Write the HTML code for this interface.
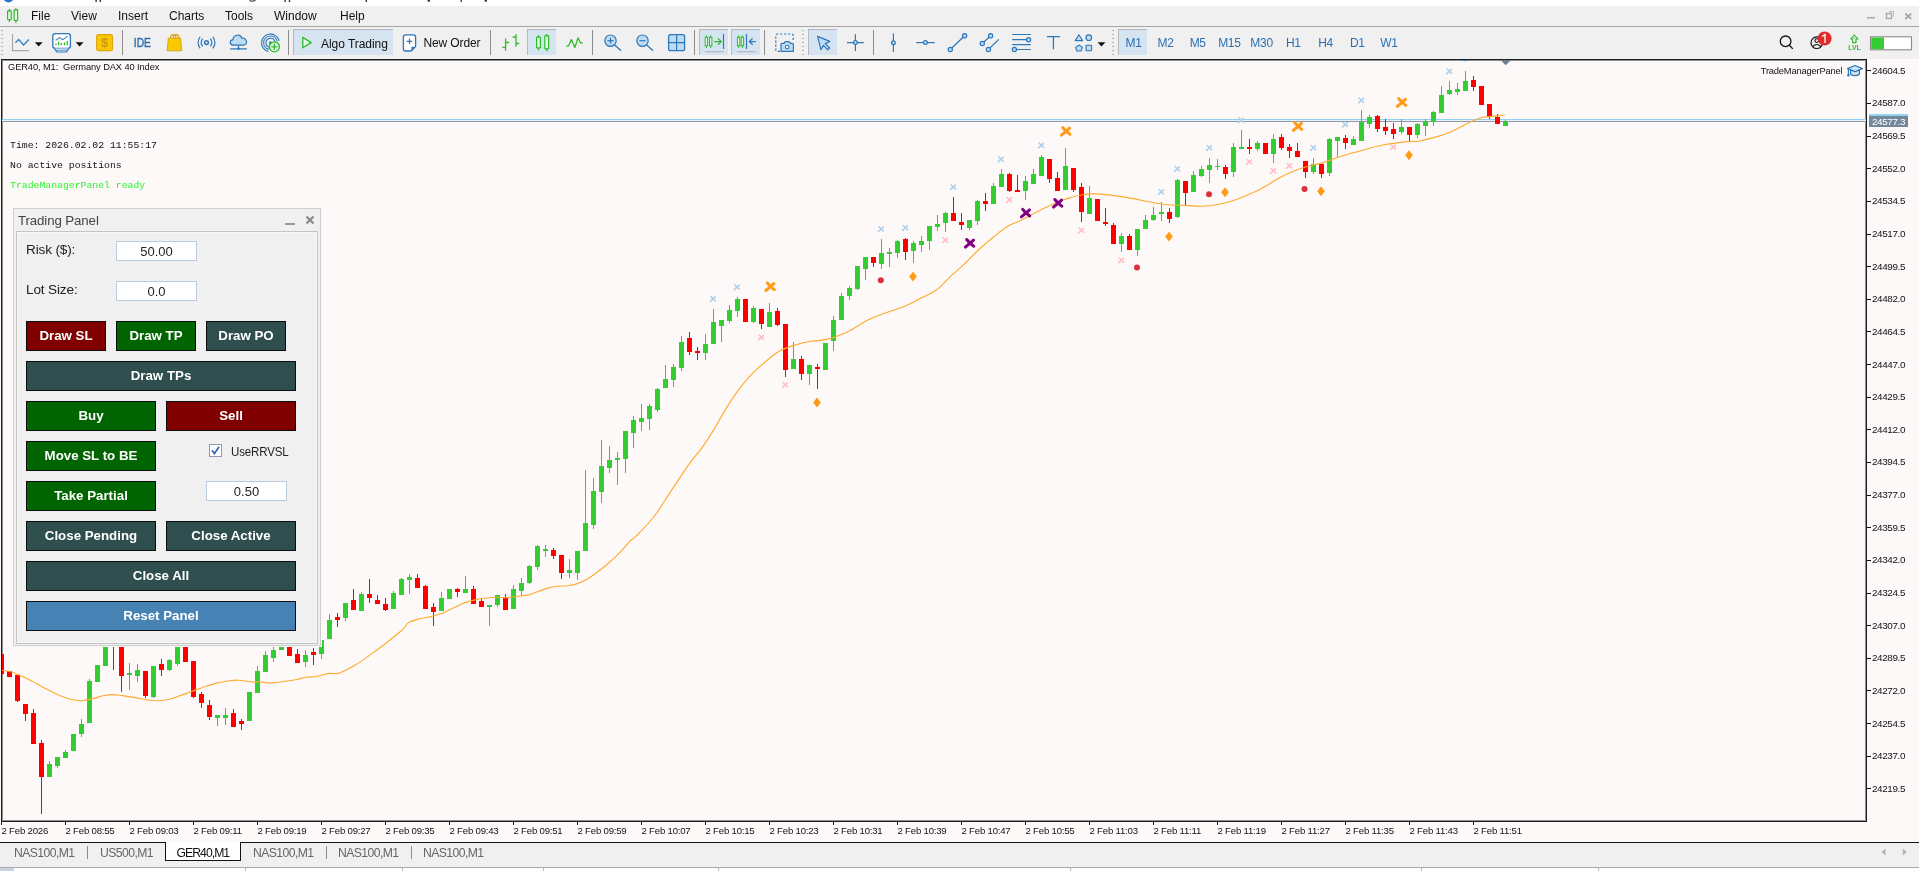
<!DOCTYPE html>
<html><head><meta charset="utf-8"><title>chart</title>
<style>
*{box-sizing:border-box;margin:0;padding:0}
html,body{width:1919px;height:871px;overflow:hidden;background:#f0f0f0;font-family:"Liberation Sans",sans-serif;}
div,svg{position:absolute}
#root{left:0;top:0;width:1919px;height:871px;will-change:transform}
#titlestrip{left:0;top:0;width:1919px;height:6px;background:#fff;overflow:hidden}
#menubar{left:0;top:6px;width:1919px;height:21px;background:#f0f0f0;border-bottom:1px solid #a6a6a6}
.menu{top:3px;font-size:12px;color:#111;line-height:14px;white-space:nowrap}
#toolbar{left:0;top:27px;width:1919px;height:32px;background:#f0f0f0}
.tbtxt{font-size:12px;line-height:14px;white-space:nowrap;color:#111}
.hl{background:#d6e4f2;border-top:1px solid #b4b9bf;border-left:1px solid #b4b9bf}
.sep{width:1px;background:#8c8c8c;top:3px;height:25px}
.dsep{width:2px;top:3px;height:25px;background:repeating-linear-gradient(to bottom,#b0b0b0 0,#b0b0b0 1.5px,transparent 1.5px,transparent 4px)}
#chart{left:0;top:59px;width:1919px;height:783px;background:#fdf9f8;overflow:hidden}
#frame{left:1px;top:0;width:1866px;height:763px;border:1px solid #1c1c1c;box-shadow:inset 0 0 0 1px rgba(0,0,0,0.42)}
#chartsvg{left:0;top:-59px}
.plab{left:1872px;font-size:9.9px;line-height:12px;color:#111;white-space:nowrap;letter-spacing:-0.37px}
.ptick{left:1867px;width:4px;height:1px;background:#111}
.tlab{top:765.5px;font-size:9.6px;line-height:11px;color:#111;white-space:nowrap;letter-spacing:-0.2px}
.ttick{top:763px;width:1px;height:3px;background:#111}
#ctitle{left:8px;top:3px;font-size:9.3px;line-height:11px;color:#111;white-space:nowrap;letter-spacing:-0.1px}
.mono{font-family:"Liberation Mono",monospace;font-size:9.8px;line-height:12px;left:10px;color:#111;white-space:nowrap}
#tmp{right:76.6px;top:6.5px;font-size:9.3px;line-height:11px;color:#111;white-space:nowrap;letter-spacing:-0.16px}
#curp{left:1869px;top:55px;width:39px;height:13px;background:#74889c;border-top:2px solid #93d4f0;color:#fff;font-size:9.9px;line-height:11.4px;padding-left:3px;letter-spacing:-0.37px}
#panel{left:13px;top:208px;width:308px;height:438px;background:#f0f0f0;border:1px solid #cfcfcf;box-shadow:0 0 0 1px #fbf8f7}
#ptitle{left:4px;top:3.5px;font-size:13.3px;line-height:16px;color:#444;white-space:nowrap;letter-spacing:-0.12px}
#pmin{left:271px;top:14px;width:10px;height:2px;background:#9a9a9a}
#pclose{left:291px;top:6px}
#pclient{left:2px;top:22px;width:302px;height:413px;border:1px solid #c4c4c4;background:#f0f0f0;box-shadow:inset 0 0 0 1px #f8f8f8}
.plabel{font-size:13px;line-height:16px;color:#222;white-space:nowrap;letter-spacing:-0.15px}
.pinput{background:#fff;border:1px solid #bccbdc;font-size:13px;line-height:19px;text-align:center;color:#222}
.pbtn{border:1px solid #0c0c0c;color:#fff;font-weight:bold;font-size:13.3px;text-align:center;line-height:28px;white-space:nowrap}
#chk{left:209px;top:444px;width:13px;height:13px;background:#fff;border:1px solid #8e9bb0;}
#chk svg{left:-1px;top:-1px}
#tabs{left:0;top:842px;width:1919px;height:25px;background:#f0f0f0;border-top:1px solid #111}
.tab{top:2.5px;font-size:12.2px;line-height:14px;color:#666;white-space:nowrap;letter-spacing:-0.57px}
.tsep{top:2.5px;width:1px;height:13px;background:#8c8c8c}
#acttab{left:165px;top:-1px;width:76px;height:18.6px;background:#fff;border:1px solid #111;border-top:none;border-bottom-width:1.5px}
#bottom{left:0;top:867px;width:1919px;height:4px;background:#fff;border-top:1px solid #ababab}
.bsep{top:0;width:1px;height:4px;background:#b8b8b8}
</style></head><body>
<div id="root">
<div id="titlestrip"><svg style="left:0;top:0" width="600" height="6" viewBox="0 0 600 6">
<ellipse cx="8.5" cy="-1.2" rx="4.6" ry="3.6" fill="#2a6fd0"/>
<g fill="#333"><rect x="95.4" y="0" width="1.4" height="2"/><rect x="99.6" y="0" width="1.4" height="2"/>
<path d="M249.5,0.3Q252,2.2 255.4,0.2" stroke="#333" stroke-width="1.1" fill="none"/>
<rect x="284.4" y="0" width="1.4" height="2"/><rect x="288.8" y="0" width="1.4" height="2"/>
<rect x="365.6" y="0" width="1.4" height="2"/><rect x="427.6" y="0" width="2.4" height="1.6"/><rect x="460.6" y="0" width="1.3" height="2"/><rect x="484.6" y="0" width="2.4" height="1.6"/>
</g></svg></div>
<div id="menubar"><svg style="left:0px;top:-6px" width="30" height="30" viewBox="0 0 30 30">
<g stroke="#22b022" stroke-width="1.1" fill="#e2fbe2"><path d="M9.4,9V22M15.9,8.2V23" fill="none"/><rect x="7.6" y="10.9" width="3.6" height="8.8" rx="0.7"/><rect x="14.1" y="9.9" width="3.6" height="10.6" rx="0.7"/></g></svg><div class="menu" style="left:31px">File</div><div class="menu" style="left:71px">View</div><div class="menu" style="left:118px">Insert</div><div class="menu" style="left:169px">Charts</div><div class="menu" style="left:225px">Tools</div><div class="menu" style="left:274px">Window</div><div class="menu" style="left:340px">Help</div><svg style="left:1860px;top:0" width="59" height="21" viewBox="1860 6 59 21">
<rect x="1867" y="17" width="8" height="1.5" fill="#a8a8a8"/>
<rect x="1886.5" y="13.5" width="5" height="5" fill="none" stroke="#a8a8a8" stroke-width="1.4"/><path d="M1889,11.5H1893.5V16.5" fill="none" stroke="#b8b8b8" stroke-width="1"/>
<path d="M1905.3,13.6L1911.3,18.8M1911.3,13.6L1905.3,18.8" stroke="#a0a0a0" stroke-width="1.7"/></svg></div>
<div id="toolbar"><div class="dsep" style="left:1px;top:3px;height:27px"></div><div class="hl" style="left:293px;top:2px;width:100px;height:26px"></div><div class="hl" style="left:527px;top:2px;width:29px;height:26px"></div><div class="hl" style="left:699px;top:2px;width:29px;height:26px"></div><div class="hl" style="left:731px;top:2px;width:29px;height:26px"></div><div class="hl" style="left:808px;top:2px;width:29px;height:26px"></div><div class="hl" style="left:1118px;top:2px;width:29px;height:26px"></div><div class="sep" style="left:122px"></div><div class="sep" style="left:288px"></div><div class="sep" style="left:490px"></div><div class="sep" style="left:592px"></div><div class="sep" style="left:694px"></div><div class="sep" style="left:764px"></div><div class="sep" style="left:873px"></div><div class="dsep" style="left:802px"></div><div class="dsep" style="left:1112px"></div><svg style="left:0;top:-27px" width="1919" height="60" viewBox="0 0 1919 60" fill="none"><path d="M12.5,34V50.6H29" stroke="#a8a8a8" stroke-width="1.1"/><path d="M15.4,42.7L18.7,39.5L23.6,45L28.9,39.5" stroke="#3a85c8" stroke-width="1.4"/><path d="M34.800000000000004,42.2H42.6L38.7,46.400000000000006Z" fill="#111"/><rect x="52.8" y="33.7" width="17.6" height="14.6" rx="2.6" fill="#fff" stroke="#2f77b8" stroke-width="1.3"/><path d="M54.3,48.4L56.8,52H66.4L68.9,48.4" stroke="#2f77b8" stroke-width="1.2" fill="#fff"/><path d="M56,50.2H67.2" stroke="#2f77b8" stroke-width="0.9"/><path d="M55.6,40.4L59.6,37.6L62.8,39.6L67.6,36.4" stroke="#2f77b8" stroke-width="1.1"/><g fill="#2dbb2d"><rect x="55.3" y="43.6" width="1.3" height="1.6"/><rect x="57.9" y="41.8" width="1.3" height="3.4"/><rect x="60.6" y="43" width="1.3" height="2.2"/><rect x="63.8" y="42.4" width="1.3" height="2.8"/><rect x="66.6" y="41" width="1.3" height="4.2"/></g><path d="M75.69999999999999,42.2H83.5L79.6,46.400000000000006Z" fill="#111"/><rect x="96.6" y="34.6" width="16" height="16" rx="2.2" fill="#f8c900" stroke="#dea512" stroke-width="1.1"/><text x="104.7" y="47.4" font-size="13" font-weight="bold" text-anchor="middle" fill="#d3920f" font-family="Liberation Sans">$</text><text x="142.4" y="47.2" font-size="12.4" text-anchor="middle" fill="#2a6cab" stroke="#2a6cab" stroke-width="0.35" font-family="Liberation Sans" textLength="17.2" lengthAdjust="spacingAndGlyphs">IDE</text><path d="M170.5,40V37.8C170.5,33.6 176,33.6 176,37.8V40M173.4,40V37.8C173.4,33.6 178.9,33.6 178.9,37.8V40" stroke="#d9a11b" stroke-width="1.2"/><path d="M168.3,38.2H180.6L181.7,50.8H167.2Z" fill="#f8c900" stroke="#dba415" stroke-width="1"/><circle cx="206.5" cy="42.6" r="1.9" stroke="#2f77b8" stroke-width="1.5"/><path d="M202.8,38.800000000000004A5.1,5.1 0 0 0 202.8,46.4M210.2,38.800000000000004A5.1,5.1 0 0 1 210.2,46.4" stroke="#2f77b8" stroke-width="1.2"/><path d="M200.2,36.800000000000004A9,9 0 0 0 200.2,48.4M212.8,36.800000000000004A9,9 0 0 1 212.8,48.4" stroke="#2f77b8" stroke-width="1.2"/><path d="M233.6,45.2C229.4,45.2 229.2,40.2 233,39.7C233,34.6 240.6,33.4 241.9,38.2C247.2,37.2 248.2,45.2 243.4,45.2Z" fill="#bcdcf2" stroke="#2f77b8" stroke-width="1.2"/><path d="M238.5,45.2V49M230.2,48.8H246.8" stroke="#2f77b8" stroke-width="1.2"/><circle cx="238.5" cy="48.8" r="1.3" fill="#2f77b8"/><circle cx="270.5" cy="42.8" r="1.6" fill="#2f77b8"/><path d="M274.9,41.8A4.5,4.5 0 1 0 269.5,47.199999999999996" stroke="#2f77b8" stroke-width="1.1"/><path d="M277.1,41.3A6.8,6.8 0 1 0 269.0,49.4" stroke="#2f77b8" stroke-width="1.1"/><path d="M279.1,40.8A8.9,8.9 0 1 0 268.5,51.5" stroke="#2f77b8" stroke-width="1.1"/><circle cx="274.4" cy="46.8" r="5" fill="#dcf7dc" stroke="#2dbb2d" stroke-width="1.3"/><path d="M271.4,46.8H277.4M274.4,43.8V49.8" stroke="#2dbb2d" stroke-width="1.3"/><path d="M302.8,37.4L311.2,42.6L302.8,47.8Z" fill="#e6f8e6" stroke="#2dbb2d" stroke-width="1.3" stroke-linejoin="round"/><path d="M405.6,34.8H413.4Q415.6,34.8 415.6,37V46.6L411.2,51H405.6Q403.4,51 403.4,48.8V37Q403.4,34.8 405.6,34.8Z" fill="#fff" stroke="#2f77b8" stroke-width="1.3"/><path d="M415.4,46.8H411.4V50.8Z" fill="#2f77b8"/><path d="M406.6,41.4H412.4M409.5,38.5V44.3" stroke="#2f77b8" stroke-width="1.2"/><path d="M505.6,38.6V50.8M502.3,47.4H505.6M505.6,42.5H509M516,34.2V46.8M512.7,37H516M516,43.5H519.2" stroke="#2dbb2d" stroke-width="1.3"/><path d="M538.5,35.3V50.2M546.7,33.9V51.2" stroke="#2dbb2d" stroke-width="1.2"/><rect x="536.6" y="37.1" width="3.8" height="10.8" rx="0.5" fill="#e4fbe4" stroke="#2dbb2d" stroke-width="1.2"/><rect x="544.8" y="35.9" width="3.8" height="13" rx="0.5" fill="#e4fbe4" stroke="#2dbb2d" stroke-width="1.2"/><path d="M566.2,45.8H568.6L571.4,39.6L574.8,47.6L578,37.8L580.4,42.8H582.8" stroke="#2dbb2d" stroke-width="1.3" stroke-linejoin="round"/><circle cx="610.5" cy="40.7" r="5.7" fill="#bcdcf2" stroke="#2f77b8" stroke-width="1.2"/><path d="M614.7,44.9L621.1,50.8" stroke="#2f77b8" stroke-width="1.3"/><path d="M607.5,40.7H613.5" stroke="#2f77b8" stroke-width="1.2"/><path d="M610.5,37.7V43.7" stroke="#2f77b8" stroke-width="1.2"/><circle cx="642.5" cy="40.7" r="5.7" fill="#bcdcf2" stroke="#2f77b8" stroke-width="1.2"/><path d="M646.7,44.9L653.1,50.8" stroke="#2f77b8" stroke-width="1.3"/><path d="M639.5,40.7H645.5" stroke="#2f77b8" stroke-width="1.2"/><rect x="668.6" y="34.7" width="16" height="16" rx="2" fill="#bcdcf2" stroke="#2f77b8" stroke-width="1.3"/><path d="M676.6,34.7V50.7M668.6,42.7H684.6" stroke="#2f77b8" stroke-width="1.2"/><path d="M706.4,35.3V48M710.7,35.3V48" stroke="#2dbb2d" stroke-width="1"/><rect x="705.2" y="37.2" width="2.4" height="8.6" fill="#e4fbe4" stroke="#2dbb2d" stroke-width="1"/><rect x="709.5" y="37.2" width="2.4" height="8.6" fill="#e4fbe4" stroke="#2dbb2d" stroke-width="1"/><path d="M714.2,41.6H721M718,38.4L721.2,41.6L718,44.8" stroke="#2dbb2d" stroke-width="1.3"/><path d="M723.5,33.9V49" stroke="#2f77b8" stroke-width="1.2"/><path d="M705,51.7H723.8" stroke="#aeb4ba" stroke-width="1.1"/><path d="M738.6,35.3V48M742.4,35.3V48" stroke="#2dbb2d" stroke-width="1"/><rect x="737.4" y="37.2" width="2.4" height="8.6" fill="#e4fbe4" stroke="#2dbb2d" stroke-width="1"/><rect x="741.2" y="37.2" width="2.4" height="8.6" fill="#e4fbe4" stroke="#2dbb2d" stroke-width="1"/><path d="M746.5,33.9V49" stroke="#2f77b8" stroke-width="1.2"/><path d="M749.6,41.6H755.8M752.6,38.4L749.4,41.6L752.6,44.8" stroke="#2f77b8" stroke-width="1.3"/><path d="M737.2,51.7H755.8" stroke="#aeb4ba" stroke-width="1.1"/><path d="M780,51.4H777.4Q775.8,51.4 775.8,49.8V35.6Q775.8,34 777.4,34H791.6Q793.2,34 793.2,35.6V41" stroke="#2f77b8" stroke-width="1.2" stroke-dasharray="2.2,1.8"/><path d="M781,51.4V44.6Q781,43.4 782.2,43.4H784L785.2,41.6H789.2L790.4,43.4H792.2Q793.4,43.4 793.4,44.6V51.4Z" fill="#bcdcf2" stroke="#2f77b8" stroke-width="1.2" stroke-linejoin="round"/><circle cx="787.2" cy="47" r="1.8" fill="#fff" stroke="#2f77b8" stroke-width="1.1"/><path d="M817.6,36.4L829.8,41.4L825.2,43.6L829.6,48L827.6,49.8L823.4,45.4L821,49.8Z" fill="#bcdcf2" stroke="#2f77b8" stroke-width="1.2" stroke-linejoin="round"/><path d="M847,42.6H863.8M855.4,34.2V51" stroke="#2f77b8" stroke-width="1.2"/><circle cx="855.4" cy="42.6" r="1.9" fill="#bcdcf2" stroke="#2f77b8" stroke-width="1.2"/><path d="M893.4,33.4V52" stroke="#2f77b8" stroke-width="1.2"/><circle cx="893.4" cy="42.7" r="1.9" fill="#bcdcf2" stroke="#2f77b8" stroke-width="1.2"/><path d="M916.2,42.6H934.8" stroke="#2f77b8" stroke-width="1.2"/><circle cx="925.4" cy="42.6" r="1.9" fill="#bcdcf2" stroke="#2f77b8" stroke-width="1.2"/><path d="M950.3,49.5L964.6,35.8" stroke="#2f77b8" stroke-width="1.2"/><circle cx="950.3" cy="49.5" r="2.1" fill="#bcdcf2" stroke="#2f77b8" stroke-width="1.2"/><circle cx="964.6" cy="35.8" r="2.1" fill="#bcdcf2" stroke="#2f77b8" stroke-width="1.2"/><path d="M982.3,43.5L990.6,35.8M988.4,49.5L998.8,39.4" stroke="#2f77b8" stroke-width="1.2"/><circle cx="982.3" cy="43.5" r="2.1" fill="#bcdcf2" stroke="#2f77b8" stroke-width="1.2"/><circle cx="990.6" cy="35.8" r="2.1" fill="#bcdcf2" stroke="#2f77b8" stroke-width="1.2"/><circle cx="988.4" cy="49.5" r="2.1" fill="#bcdcf2" stroke="#2f77b8" stroke-width="1.2"/><path d="M1012.2,34.5H1030.8M1012.2,39.7H1030.8M1012.2,44.6H1030.8M1012.2,49.5H1030.8" stroke="#2f77b8" stroke-width="1.2"/><circle cx="1028.6" cy="39.7" r="2.1" fill="#bcdcf2" stroke="#2f77b8" stroke-width="1.2"/><circle cx="1014.4" cy="49.5" r="2.1" fill="#bcdcf2" stroke="#2f77b8" stroke-width="1.2"/><path d="M1047,36.6H1060M1053.4,36.6V49.3" stroke="#2f77b8" stroke-width="1.3"/><path d="M1078.9,34.8L1082.6,40.6H1075.2Z" fill="#bcdcf2" stroke="#2f77b8" stroke-width="1.1" stroke-linejoin="round"/><circle cx="1088.8" cy="37.7" r="2.8" fill="#bcdcf2" stroke="#2f77b8" stroke-width="1.2"/><path d="M1079,45L1082.4,47.4L1081.2,51H1076.8L1075.6,47.4Z" fill="#bcdcf2" stroke="#2f77b8" stroke-width="1.1" stroke-linejoin="round"/><rect x="1086" y="45.2" width="5.6" height="5.6" rx="0.6" fill="#bcdcf2" stroke="#2f77b8" stroke-width="1.1"/><path d="M1097.6,42.2H1105.4L1101.5,46.400000000000006Z" fill="#111"/><circle cx="1785.6" cy="41.3" r="5.3" stroke="#111" stroke-width="1.3"/><path d="M1789.4,45.3L1792.8,48.9" stroke="#111" stroke-width="1.3"/><circle cx="1816.8" cy="42.7" r="5.8" stroke="#111" stroke-width="1.2"/><circle cx="1816.8" cy="40.6" r="1.9" stroke="#111" stroke-width="1.1"/><path d="M1812.6,46.6Q1816.8,42.4 1821,46.6" stroke="#111" stroke-width="1.1"/><circle cx="1824.6" cy="38.5" r="7" fill="#e02b2b"/><path d="M1822.2,36.4L1825,34.4V42.9" stroke="#fff" stroke-width="1.3" fill="none"/><path d="M1854.3,35L1858,39H1856V42.6H1852.6V39H1850.6Z" stroke="#2dbb2d" stroke-width="1.1" stroke-linejoin="round"/><path d="M1853.4,38.4L1854.3,37.4L1855.2,38.4" stroke="#2dbb2d" stroke-width="0.9"/><text x="1854.5" y="50" font-size="7.4" font-weight="bold" text-anchor="middle" fill="#2dbb2d" font-family="Liberation Sans" textLength="12.4" lengthAdjust="spacingAndGlyphs">LVL</text><rect x="1870.5" y="36.8" width="41" height="13" fill="#fff" stroke="#8a8a8a" stroke-width="1.1"/><rect x="1871.2" y="37.5" width="12.8" height="11.6" fill="#35cc35"/></svg><div class="tbtxt" style="left:321px;top:10px;letter-spacing:-0.05px">Algo Trading</div><div class="tbtxt" style="left:423.5px;top:9px;letter-spacing:-0.12px">New Order</div><div class="tbtxt" style="left:1113.5px;width:40px;text-align:center;top:9px;color:#2a70b4;letter-spacing:-0.3px">M1</div><div class="tbtxt" style="left:1145.5px;width:40px;text-align:center;top:9px;color:#2a70b4;letter-spacing:-0.3px">M2</div><div class="tbtxt" style="left:1177.7px;width:40px;text-align:center;top:9px;color:#2a70b4;letter-spacing:-0.3px">M5</div><div class="tbtxt" style="left:1209.4px;width:40px;text-align:center;top:9px;color:#2a70b4;letter-spacing:-0.3px">M15</div><div class="tbtxt" style="left:1241.6px;width:40px;text-align:center;top:9px;color:#2a70b4;letter-spacing:-0.3px">M30</div><div class="tbtxt" style="left:1273.3px;width:40px;text-align:center;top:9px;color:#2a70b4;letter-spacing:-0.3px">H1</div><div class="tbtxt" style="left:1305.5px;width:40px;text-align:center;top:9px;color:#2a70b4;letter-spacing:-0.3px">H4</div><div class="tbtxt" style="left:1337.3px;width:40px;text-align:center;top:9px;color:#2a70b4;letter-spacing:-0.3px">D1</div><div class="tbtxt" style="left:1369px;width:40px;text-align:center;top:9px;color:#2a70b4;letter-spacing:-0.3px">W1</div></div>
<div id="chart">
 <div id="frame"></div>
 <svg id="chartsvg" width="1919" height="871" viewBox="0 0 1919 871">
  <clipPath id="cc"><rect x="2" y="60" width="1864" height="761"/></clipPath>
  <g clip-path="url(#cc)" shape-rendering="crispEdges">
   <rect x="2" y="119" width="1864" height="1" fill="#8fd1f0"/>
   <rect x="2" y="120" width="1864" height="1" fill="#e9f0f6"/>
   <rect x="2" y="121" width="1864" height="1" fill="#8b9bad"/>
   <rect x="1" y="654" width="1" height="20" fill="#ff0000"/>
<rect x="-1" y="654" width="5" height="20" fill="#ff0000"/>
<rect x="9" y="671" width="1" height="6" fill="#ff0000"/>
<rect x="7" y="671" width="5" height="6" fill="#ff0000"/>
<rect x="17" y="675" width="1" height="27" fill="#ff0000"/>
<rect x="15" y="675" width="5" height="26" fill="#ff0000"/>
<rect x="25" y="704" width="1" height="17" fill="#ff0000"/>
<rect x="23" y="704" width="5" height="10" fill="#ff0000"/>
<rect x="33" y="709" width="1" height="35" fill="#ff0000"/>
<rect x="31" y="713" width="5" height="31" fill="#ff0000"/>
<rect x="41" y="740" width="1" height="74" fill="#ff0000"/>
<rect x="39" y="743" width="5" height="34" fill="#ff0000"/>
<rect x="49" y="761" width="1" height="16" fill="#32cd32"/>
<rect x="47" y="764" width="5" height="13" fill="#32cd32"/>
<rect x="57" y="757" width="1" height="11" fill="#32cd32"/>
<rect x="55" y="757" width="5" height="9" fill="#32cd32"/>
<rect x="65" y="750" width="1" height="8" fill="#32cd32"/>
<rect x="63" y="752" width="5" height="6" fill="#32cd32"/>
<rect x="73" y="734" width="1" height="17" fill="#32cd32"/>
<rect x="71" y="734" width="5" height="17" fill="#32cd32"/>
<rect x="81" y="719" width="1" height="18" fill="#32cd32"/>
<rect x="79" y="724" width="5" height="10" fill="#32cd32"/>
<rect x="89" y="679" width="1" height="44" fill="#32cd32"/>
<rect x="87" y="681" width="5" height="42" fill="#32cd32"/>
<rect x="97" y="665" width="1" height="17" fill="#32cd32"/>
<rect x="95" y="665" width="5" height="17" fill="#32cd32"/>
<rect x="105" y="638" width="1" height="28" fill="#32cd32"/>
<rect x="103" y="640" width="5" height="26" fill="#32cd32"/>
<rect x="113" y="628" width="1" height="42" fill="#ff0000"/>
<rect x="111" y="630" width="5" height="10" fill="#ff0000"/>
<rect x="121" y="636" width="1" height="56" fill="#ff0000"/>
<rect x="119" y="638" width="5" height="38" fill="#ff0000"/>
<rect x="129" y="663" width="1" height="27" fill="#32cd32"/>
<rect x="127" y="673" width="5" height="2" fill="#32cd32"/>
<rect x="137" y="664" width="1" height="18" fill="#32cd32"/>
<rect x="135" y="670" width="5" height="6" fill="#32cd32"/>
<rect x="145" y="671" width="1" height="27" fill="#ff0000"/>
<rect x="143" y="671" width="5" height="25" fill="#ff0000"/>
<rect x="153" y="666" width="1" height="32" fill="#32cd32"/>
<rect x="151" y="666" width="5" height="31" fill="#32cd32"/>
<rect x="161" y="659" width="1" height="17" fill="#ff0000"/>
<rect x="159" y="664" width="5" height="6" fill="#ff0000"/>
<rect x="169" y="659" width="1" height="12" fill="#32cd32"/>
<rect x="167" y="660" width="5" height="10" fill="#32cd32"/>
<rect x="177" y="638" width="1" height="28" fill="#32cd32"/>
<rect x="175" y="640" width="5" height="24" fill="#32cd32"/>
<rect x="185" y="638" width="1" height="24" fill="#ff0000"/>
<rect x="183" y="640" width="5" height="22" fill="#ff0000"/>
<rect x="193" y="661" width="1" height="37" fill="#ff0000"/>
<rect x="191" y="661" width="5" height="36" fill="#ff0000"/>
<rect x="201" y="692" width="1" height="16" fill="#ff0000"/>
<rect x="199" y="694" width="5" height="9" fill="#ff0000"/>
<rect x="209" y="700" width="1" height="20" fill="#ff0000"/>
<rect x="207" y="705" width="5" height="12" fill="#ff0000"/>
<rect x="217" y="715" width="1" height="11" fill="#32cd32"/>
<rect x="215" y="715" width="5" height="3" fill="#32cd32"/>
<rect x="225" y="708" width="1" height="17" fill="#32cd32"/>
<rect x="223" y="715" width="5" height="3" fill="#32cd32"/>
<rect x="233" y="709" width="1" height="18" fill="#ff0000"/>
<rect x="231" y="713" width="5" height="14" fill="#ff0000"/>
<rect x="241" y="719" width="1" height="11" fill="#ff0000"/>
<rect x="239" y="721" width="5" height="3" fill="#ff0000"/>
<rect x="249" y="692" width="1" height="29" fill="#32cd32"/>
<rect x="247" y="692" width="5" height="29" fill="#32cd32"/>
<rect x="257" y="666" width="1" height="27" fill="#32cd32"/>
<rect x="255" y="671" width="5" height="22" fill="#32cd32"/>
<rect x="265" y="651" width="1" height="21" fill="#32cd32"/>
<rect x="263" y="655" width="5" height="17" fill="#32cd32"/>
<rect x="273" y="647" width="1" height="15" fill="#32cd32"/>
<rect x="271" y="650" width="5" height="8" fill="#32cd32"/>
<rect x="281" y="638" width="1" height="12" fill="#32cd32"/>
<rect x="279" y="640" width="5" height="10" fill="#32cd32"/>
<rect x="289" y="638" width="1" height="18" fill="#ff0000"/>
<rect x="287" y="640" width="5" height="16" fill="#ff0000"/>
<rect x="297" y="649" width="1" height="14" fill="#ff0000"/>
<rect x="295" y="654" width="5" height="9" fill="#ff0000"/>
<rect x="305" y="650" width="1" height="17" fill="#32cd32"/>
<rect x="303" y="655" width="5" height="7" fill="#32cd32"/>
<rect x="313" y="648" width="1" height="17" fill="#ff0000"/>
<rect x="311" y="652" width="5" height="3" fill="#ff0000"/>
<rect x="321" y="638" width="1" height="21" fill="#32cd32"/>
<rect x="319" y="640" width="5" height="14" fill="#32cd32"/>
<rect x="329" y="614" width="1" height="25" fill="#32cd32"/>
<rect x="327" y="620" width="5" height="19" fill="#32cd32"/>
<rect x="337" y="613" width="1" height="14" fill="#ff0000"/>
<rect x="335" y="617" width="5" height="3" fill="#ff0000"/>
<rect x="345" y="603" width="1" height="18" fill="#32cd32"/>
<rect x="343" y="603" width="5" height="15" fill="#32cd32"/>
<rect x="353" y="589" width="1" height="21" fill="#ff0000"/>
<rect x="351" y="600" width="5" height="10" fill="#ff0000"/>
<rect x="361" y="592" width="1" height="19" fill="#32cd32"/>
<rect x="359" y="594" width="5" height="17" fill="#32cd32"/>
<rect x="369" y="579" width="1" height="24" fill="#ff0000"/>
<rect x="367" y="594" width="5" height="4" fill="#ff0000"/>
<rect x="377" y="595" width="1" height="9" fill="#ff0000"/>
<rect x="375" y="600" width="5" height="4" fill="#ff0000"/>
<rect x="385" y="598" width="1" height="13" fill="#ff0000"/>
<rect x="383" y="604" width="5" height="6" fill="#ff0000"/>
<rect x="393" y="591" width="1" height="18" fill="#32cd32"/>
<rect x="391" y="593" width="5" height="16" fill="#32cd32"/>
<rect x="401" y="578" width="1" height="17" fill="#32cd32"/>
<rect x="399" y="579" width="5" height="16" fill="#32cd32"/>
<rect x="409" y="574" width="1" height="20" fill="#32cd32"/>
<rect x="407" y="577" width="5" height="3" fill="#32cd32"/>
<rect x="417" y="574" width="1" height="14" fill="#ff0000"/>
<rect x="415" y="578" width="5" height="10" fill="#ff0000"/>
<rect x="425" y="585" width="1" height="24" fill="#ff0000"/>
<rect x="423" y="586" width="5" height="23" fill="#ff0000"/>
<rect x="433" y="603" width="1" height="23" fill="#ff0000"/>
<rect x="431" y="607" width="5" height="5" fill="#ff0000"/>
<rect x="441" y="592" width="1" height="19" fill="#32cd32"/>
<rect x="439" y="598" width="5" height="13" fill="#32cd32"/>
<rect x="449" y="589" width="1" height="10" fill="#32cd32"/>
<rect x="447" y="589" width="5" height="10" fill="#32cd32"/>
<rect x="457" y="588" width="1" height="9" fill="#ff0000"/>
<rect x="455" y="589" width="5" height="3" fill="#ff0000"/>
<rect x="465" y="576" width="1" height="17" fill="#32cd32"/>
<rect x="463" y="589" width="5" height="4" fill="#32cd32"/>
<rect x="473" y="586" width="1" height="18" fill="#ff0000"/>
<rect x="471" y="589" width="5" height="15" fill="#ff0000"/>
<rect x="481" y="598" width="1" height="9" fill="#ff0000"/>
<rect x="479" y="601" width="5" height="6" fill="#ff0000"/>
<rect x="489" y="605" width="1" height="21" fill="#32cd32"/>
<rect x="487" y="605" width="5" height="2" fill="#32cd32"/>
<rect x="497" y="595" width="1" height="12" fill="#32cd32"/>
<rect x="495" y="595" width="5" height="10" fill="#32cd32"/>
<rect x="505" y="594" width="1" height="16" fill="#ff0000"/>
<rect x="503" y="597" width="5" height="13" fill="#ff0000"/>
<rect x="513" y="585" width="1" height="24" fill="#32cd32"/>
<rect x="511" y="589" width="5" height="20" fill="#32cd32"/>
<rect x="521" y="578" width="1" height="17" fill="#32cd32"/>
<rect x="519" y="583" width="5" height="8" fill="#32cd32"/>
<rect x="529" y="565" width="1" height="19" fill="#32cd32"/>
<rect x="527" y="566" width="5" height="17" fill="#32cd32"/>
<rect x="537" y="545" width="1" height="25" fill="#32cd32"/>
<rect x="535" y="546" width="5" height="21" fill="#32cd32"/>
<rect x="545" y="545" width="1" height="12" fill="#32cd32"/>
<rect x="543" y="549" width="5" height="2" fill="#32cd32"/>
<rect x="553" y="548" width="1" height="11" fill="#ff0000"/>
<rect x="551" y="550" width="5" height="6" fill="#ff0000"/>
<rect x="561" y="555" width="1" height="24" fill="#ff0000"/>
<rect x="559" y="555" width="5" height="18" fill="#ff0000"/>
<rect x="569" y="559" width="1" height="19" fill="#32cd32"/>
<rect x="567" y="570" width="5" height="3" fill="#32cd32"/>
<rect x="577" y="551" width="1" height="29" fill="#32cd32"/>
<rect x="575" y="551" width="5" height="22" fill="#32cd32"/>
<rect x="585" y="470" width="1" height="81" fill="#32cd32"/>
<rect x="583" y="523" width="5" height="28" fill="#32cd32"/>
<rect x="593" y="478" width="1" height="51" fill="#32cd32"/>
<rect x="591" y="491" width="5" height="34" fill="#32cd32"/>
<rect x="601" y="440" width="1" height="63" fill="#32cd32"/>
<rect x="599" y="466" width="5" height="26" fill="#32cd32"/>
<rect x="609" y="446" width="1" height="27" fill="#32cd32"/>
<rect x="607" y="460" width="5" height="8" fill="#32cd32"/>
<rect x="617" y="452" width="1" height="33" fill="#32cd32"/>
<rect x="615" y="458" width="5" height="2" fill="#32cd32"/>
<rect x="625" y="431" width="1" height="42" fill="#32cd32"/>
<rect x="623" y="431" width="5" height="28" fill="#32cd32"/>
<rect x="633" y="416" width="1" height="32" fill="#32cd32"/>
<rect x="631" y="420" width="5" height="13" fill="#32cd32"/>
<rect x="641" y="404" width="1" height="27" fill="#32cd32"/>
<rect x="639" y="418" width="5" height="4" fill="#32cd32"/>
<rect x="649" y="404" width="1" height="26" fill="#32cd32"/>
<rect x="647" y="406" width="5" height="13" fill="#32cd32"/>
<rect x="657" y="388" width="1" height="24" fill="#32cd32"/>
<rect x="655" y="389" width="5" height="21" fill="#32cd32"/>
<rect x="665" y="365" width="1" height="23" fill="#32cd32"/>
<rect x="663" y="379" width="5" height="9" fill="#32cd32"/>
<rect x="673" y="364" width="1" height="23" fill="#32cd32"/>
<rect x="671" y="367" width="5" height="13" fill="#32cd32"/>
<rect x="681" y="336" width="1" height="35" fill="#32cd32"/>
<rect x="679" y="342" width="5" height="26" fill="#32cd32"/>
<rect x="689" y="332" width="1" height="23" fill="#ff0000"/>
<rect x="687" y="338" width="5" height="14" fill="#ff0000"/>
<rect x="697" y="347" width="1" height="13" fill="#ff0000"/>
<rect x="695" y="351" width="5" height="2" fill="#ff0000"/>
<rect x="705" y="334" width="1" height="26" fill="#32cd32"/>
<rect x="703" y="344" width="5" height="9" fill="#32cd32"/>
<rect x="713" y="309" width="1" height="35" fill="#32cd32"/>
<rect x="711" y="322" width="5" height="22" fill="#32cd32"/>
<rect x="721" y="320" width="1" height="22" fill="#32cd32"/>
<rect x="719" y="320" width="5" height="6" fill="#32cd32"/>
<rect x="729" y="305" width="1" height="18" fill="#32cd32"/>
<rect x="727" y="310" width="5" height="11" fill="#32cd32"/>
<rect x="737" y="297" width="1" height="20" fill="#32cd32"/>
<rect x="735" y="299" width="5" height="12" fill="#32cd32"/>
<rect x="745" y="299" width="1" height="23" fill="#ff0000"/>
<rect x="743" y="299" width="5" height="23" fill="#ff0000"/>
<rect x="753" y="306" width="1" height="17" fill="#32cd32"/>
<rect x="751" y="308" width="5" height="14" fill="#32cd32"/>
<rect x="761" y="309" width="1" height="20" fill="#ff0000"/>
<rect x="759" y="309" width="5" height="15" fill="#ff0000"/>
<rect x="769" y="303" width="1" height="24" fill="#32cd32"/>
<rect x="767" y="312" width="5" height="15" fill="#32cd32"/>
<rect x="777" y="308" width="1" height="18" fill="#ff0000"/>
<rect x="775" y="311" width="5" height="14" fill="#ff0000"/>
<rect x="785" y="324" width="1" height="53" fill="#ff0000"/>
<rect x="783" y="324" width="5" height="46" fill="#ff0000"/>
<rect x="793" y="342" width="1" height="27" fill="#32cd32"/>
<rect x="791" y="359" width="5" height="10" fill="#32cd32"/>
<rect x="801" y="356" width="1" height="24" fill="#ff0000"/>
<rect x="799" y="359" width="5" height="15" fill="#ff0000"/>
<rect x="809" y="365" width="1" height="20" fill="#32cd32"/>
<rect x="807" y="365" width="5" height="9" fill="#32cd32"/>
<rect x="817" y="364" width="1" height="25" fill="#ff0000"/>
<rect x="815" y="367" width="5" height="2" fill="#ff0000"/>
<rect x="825" y="343" width="1" height="27" fill="#32cd32"/>
<rect x="823" y="343" width="5" height="27" fill="#32cd32"/>
<rect x="833" y="316" width="1" height="35" fill="#32cd32"/>
<rect x="831" y="320" width="5" height="21" fill="#32cd32"/>
<rect x="841" y="293" width="1" height="27" fill="#32cd32"/>
<rect x="839" y="296" width="5" height="24" fill="#32cd32"/>
<rect x="849" y="286" width="1" height="14" fill="#32cd32"/>
<rect x="847" y="288" width="5" height="8" fill="#32cd32"/>
<rect x="857" y="266" width="1" height="24" fill="#32cd32"/>
<rect x="855" y="266" width="5" height="23" fill="#32cd32"/>
<rect x="865" y="257" width="1" height="23" fill="#32cd32"/>
<rect x="863" y="257" width="5" height="12" fill="#32cd32"/>
<rect x="873" y="257" width="1" height="10" fill="#ff0000"/>
<rect x="871" y="257" width="5" height="6" fill="#ff0000"/>
<rect x="881" y="239" width="1" height="30" fill="#32cd32"/>
<rect x="879" y="253" width="5" height="11" fill="#32cd32"/>
<rect x="889" y="248" width="1" height="19" fill="#32cd32"/>
<rect x="887" y="252" width="5" height="2" fill="#32cd32"/>
<rect x="897" y="240" width="1" height="18" fill="#32cd32"/>
<rect x="895" y="241" width="5" height="12" fill="#32cd32"/>
<rect x="905" y="238" width="1" height="22" fill="#ff0000"/>
<rect x="903" y="239" width="5" height="13" fill="#ff0000"/>
<rect x="913" y="241" width="1" height="22" fill="#32cd32"/>
<rect x="911" y="243" width="5" height="8" fill="#32cd32"/>
<rect x="921" y="236" width="1" height="16" fill="#32cd32"/>
<rect x="919" y="241" width="5" height="4" fill="#32cd32"/>
<rect x="929" y="226" width="1" height="24" fill="#32cd32"/>
<rect x="927" y="226" width="5" height="15" fill="#32cd32"/>
<rect x="937" y="215" width="1" height="16" fill="#32cd32"/>
<rect x="935" y="224" width="5" height="3" fill="#32cd32"/>
<rect x="945" y="212" width="1" height="20" fill="#32cd32"/>
<rect x="943" y="213" width="5" height="10" fill="#32cd32"/>
<rect x="953" y="197" width="1" height="24" fill="#ff0000"/>
<rect x="951" y="213" width="5" height="8" fill="#ff0000"/>
<rect x="961" y="213" width="1" height="17" fill="#ff0000"/>
<rect x="959" y="222" width="5" height="3" fill="#ff0000"/>
<rect x="969" y="220" width="1" height="10" fill="#32cd32"/>
<rect x="967" y="220" width="5" height="8" fill="#32cd32"/>
<rect x="977" y="200" width="1" height="25" fill="#32cd32"/>
<rect x="975" y="201" width="5" height="20" fill="#32cd32"/>
<rect x="985" y="193" width="1" height="18" fill="#ff0000"/>
<rect x="983" y="201" width="5" height="3" fill="#ff0000"/>
<rect x="993" y="183" width="1" height="21" fill="#32cd32"/>
<rect x="991" y="186" width="5" height="18" fill="#32cd32"/>
<rect x="1001" y="169" width="1" height="18" fill="#32cd32"/>
<rect x="999" y="174" width="5" height="13" fill="#32cd32"/>
<rect x="1009" y="173" width="1" height="19" fill="#ff0000"/>
<rect x="1007" y="174" width="5" height="17" fill="#ff0000"/>
<rect x="1017" y="175" width="1" height="17" fill="#ff0000"/>
<rect x="1015" y="190" width="5" height="2" fill="#ff0000"/>
<rect x="1025" y="176" width="1" height="24" fill="#32cd32"/>
<rect x="1023" y="181" width="5" height="10" fill="#32cd32"/>
<rect x="1033" y="169" width="1" height="15" fill="#32cd32"/>
<rect x="1031" y="174" width="5" height="10" fill="#32cd32"/>
<rect x="1041" y="155" width="1" height="21" fill="#32cd32"/>
<rect x="1039" y="157" width="5" height="19" fill="#32cd32"/>
<rect x="1049" y="159" width="1" height="24" fill="#ff0000"/>
<rect x="1047" y="159" width="5" height="20" fill="#ff0000"/>
<rect x="1057" y="172" width="1" height="19" fill="#ff0000"/>
<rect x="1055" y="178" width="5" height="13" fill="#ff0000"/>
<rect x="1065" y="148" width="1" height="42" fill="#32cd32"/>
<rect x="1063" y="166" width="5" height="24" fill="#32cd32"/>
<rect x="1073" y="168" width="1" height="24" fill="#ff0000"/>
<rect x="1071" y="168" width="5" height="22" fill="#ff0000"/>
<rect x="1081" y="183" width="1" height="39" fill="#ff0000"/>
<rect x="1079" y="187" width="5" height="25" fill="#ff0000"/>
<rect x="1089" y="186" width="1" height="28" fill="#32cd32"/>
<rect x="1087" y="198" width="5" height="16" fill="#32cd32"/>
<rect x="1097" y="199" width="1" height="22" fill="#ff0000"/>
<rect x="1095" y="199" width="5" height="22" fill="#ff0000"/>
<rect x="1105" y="208" width="1" height="18" fill="#ff0000"/>
<rect x="1103" y="222" width="5" height="2" fill="#ff0000"/>
<rect x="1113" y="223" width="1" height="21" fill="#ff0000"/>
<rect x="1111" y="225" width="5" height="19" fill="#ff0000"/>
<rect x="1121" y="233" width="1" height="19" fill="#32cd32"/>
<rect x="1119" y="236" width="5" height="8" fill="#32cd32"/>
<rect x="1129" y="234" width="1" height="16" fill="#ff0000"/>
<rect x="1127" y="236" width="5" height="14" fill="#ff0000"/>
<rect x="1137" y="229" width="1" height="27" fill="#32cd32"/>
<rect x="1135" y="229" width="5" height="21" fill="#32cd32"/>
<rect x="1145" y="215" width="1" height="14" fill="#32cd32"/>
<rect x="1143" y="220" width="5" height="9" fill="#32cd32"/>
<rect x="1153" y="207" width="1" height="14" fill="#32cd32"/>
<rect x="1151" y="215" width="5" height="5" fill="#32cd32"/>
<rect x="1161" y="202" width="1" height="19" fill="#32cd32"/>
<rect x="1159" y="212" width="5" height="2" fill="#32cd32"/>
<rect x="1169" y="208" width="1" height="15" fill="#ff0000"/>
<rect x="1167" y="212" width="5" height="7" fill="#ff0000"/>
<rect x="1177" y="179" width="1" height="39" fill="#32cd32"/>
<rect x="1175" y="180" width="5" height="37" fill="#32cd32"/>
<rect x="1185" y="181" width="1" height="25" fill="#ff0000"/>
<rect x="1183" y="181" width="5" height="12" fill="#ff0000"/>
<rect x="1193" y="171" width="1" height="21" fill="#32cd32"/>
<rect x="1191" y="175" width="5" height="17" fill="#32cd32"/>
<rect x="1201" y="166" width="1" height="11" fill="#32cd32"/>
<rect x="1199" y="169" width="5" height="7" fill="#32cd32"/>
<rect x="1209" y="158" width="1" height="25" fill="#32cd32"/>
<rect x="1207" y="165" width="5" height="5" fill="#32cd32"/>
<rect x="1217" y="159" width="1" height="11" fill="#32cd32"/>
<rect x="1215" y="166" width="5" height="1" fill="#32cd32"/>
<rect x="1225" y="165" width="1" height="14" fill="#ff0000"/>
<rect x="1223" y="167" width="5" height="7" fill="#ff0000"/>
<rect x="1233" y="143" width="1" height="34" fill="#32cd32"/>
<rect x="1231" y="147" width="5" height="25" fill="#32cd32"/>
<rect x="1241" y="130" width="1" height="19" fill="#32cd32"/>
<rect x="1239" y="147" width="5" height="2" fill="#32cd32"/>
<rect x="1249" y="139" width="1" height="15" fill="#ff0000"/>
<rect x="1247" y="147" width="5" height="2" fill="#ff0000"/>
<rect x="1257" y="141" width="1" height="10" fill="#32cd32"/>
<rect x="1255" y="143" width="5" height="6" fill="#32cd32"/>
<rect x="1265" y="143" width="1" height="11" fill="#ff0000"/>
<rect x="1263" y="143" width="5" height="11" fill="#ff0000"/>
<rect x="1273" y="134" width="1" height="29" fill="#32cd32"/>
<rect x="1271" y="139" width="5" height="15" fill="#32cd32"/>
<rect x="1281" y="134" width="1" height="16" fill="#ff0000"/>
<rect x="1279" y="137" width="5" height="11" fill="#ff0000"/>
<rect x="1289" y="144" width="1" height="14" fill="#ff0000"/>
<rect x="1287" y="147" width="5" height="4" fill="#ff0000"/>
<rect x="1297" y="143" width="1" height="14" fill="#ff0000"/>
<rect x="1295" y="151" width="5" height="6" fill="#ff0000"/>
<rect x="1305" y="161" width="1" height="17" fill="#ff0000"/>
<rect x="1303" y="161" width="5" height="11" fill="#ff0000"/>
<rect x="1313" y="158" width="1" height="16" fill="#32cd32"/>
<rect x="1311" y="164" width="5" height="8" fill="#32cd32"/>
<rect x="1321" y="164" width="1" height="14" fill="#ff0000"/>
<rect x="1319" y="164" width="5" height="10" fill="#ff0000"/>
<rect x="1329" y="138" width="1" height="38" fill="#32cd32"/>
<rect x="1327" y="139" width="5" height="34" fill="#32cd32"/>
<rect x="1337" y="137" width="1" height="20" fill="#32cd32"/>
<rect x="1335" y="137" width="5" height="4" fill="#32cd32"/>
<rect x="1345" y="135" width="1" height="14" fill="#ff0000"/>
<rect x="1343" y="138" width="5" height="5" fill="#ff0000"/>
<rect x="1353" y="136" width="1" height="9" fill="#32cd32"/>
<rect x="1351" y="139" width="5" height="6" fill="#32cd32"/>
<rect x="1361" y="110" width="1" height="31" fill="#32cd32"/>
<rect x="1359" y="122" width="5" height="19" fill="#32cd32"/>
<rect x="1369" y="115" width="1" height="13" fill="#32cd32"/>
<rect x="1367" y="117" width="5" height="7" fill="#32cd32"/>
<rect x="1377" y="115" width="1" height="17" fill="#ff0000"/>
<rect x="1375" y="116" width="5" height="13" fill="#ff0000"/>
<rect x="1385" y="119" width="1" height="16" fill="#ff0000"/>
<rect x="1383" y="127" width="5" height="4" fill="#ff0000"/>
<rect x="1393" y="123" width="1" height="16" fill="#ff0000"/>
<rect x="1391" y="129" width="5" height="5" fill="#ff0000"/>
<rect x="1401" y="119" width="1" height="15" fill="#32cd32"/>
<rect x="1399" y="127" width="5" height="5" fill="#32cd32"/>
<rect x="1409" y="127" width="1" height="15" fill="#ff0000"/>
<rect x="1407" y="127" width="5" height="8" fill="#ff0000"/>
<rect x="1417" y="123" width="1" height="15" fill="#32cd32"/>
<rect x="1415" y="124" width="5" height="11" fill="#32cd32"/>
<rect x="1425" y="119" width="1" height="17" fill="#32cd32"/>
<rect x="1423" y="121" width="5" height="5" fill="#32cd32"/>
<rect x="1433" y="111" width="1" height="15" fill="#32cd32"/>
<rect x="1431" y="112" width="5" height="10" fill="#32cd32"/>
<rect x="1441" y="86" width="1" height="27" fill="#32cd32"/>
<rect x="1439" y="95" width="5" height="18" fill="#32cd32"/>
<rect x="1449" y="81" width="1" height="14" fill="#32cd32"/>
<rect x="1447" y="90" width="5" height="4" fill="#32cd32"/>
<rect x="1457" y="83" width="1" height="12" fill="#32cd32"/>
<rect x="1455" y="89" width="5" height="3" fill="#32cd32"/>
<rect x="1465" y="71" width="1" height="20" fill="#32cd32"/>
<rect x="1463" y="81" width="5" height="10" fill="#32cd32"/>
<rect x="1473" y="76" width="1" height="15" fill="#ff0000"/>
<rect x="1471" y="80" width="5" height="7" fill="#ff0000"/>
<rect x="1481" y="86" width="1" height="19" fill="#ff0000"/>
<rect x="1479" y="86" width="5" height="19" fill="#ff0000"/>
<rect x="1489" y="104" width="1" height="15" fill="#ff0000"/>
<rect x="1487" y="104" width="5" height="13" fill="#ff0000"/>
<rect x="1497" y="114" width="1" height="10" fill="#ff0000"/>
<rect x="1495" y="117" width="5" height="7" fill="#ff0000"/>
<rect x="1505" y="120" width="1" height="6" fill="#32cd32"/>
<rect x="1503" y="121" width="5" height="5" fill="#32cd32"/>
  </g>
  <g clip-path="url(#cc)">
   <path d="M2,670.3C2.2,670.3 1.9,670.2 3.4,670.5C4.9,670.8 8.0,671.0 10.8,671.8C13.6,672.6 16.9,674.0 20.3,675.5C23.7,677.0 27.4,678.7 31.2,680.7C35.0,682.7 39.1,685.1 43.4,687.4C47.7,689.6 52.4,692.2 56.9,694.2C61.4,696.2 66.4,698.2 70.5,699.3C74.6,700.4 77.7,700.8 81.3,700.7C84.9,700.6 88.5,699.7 92.1,698.9C95.7,698.1 99.6,696.5 103,695.8C106.4,695.1 109.3,694.6 112.5,694.6C115.7,694.6 118.2,695.1 122,695.6C125.8,696.1 131.2,696.9 135.5,697.6C139.8,698.3 143.9,699.5 147.7,700C151.5,700.5 154.9,700.8 158.5,700.7C162.1,700.6 165.8,700.1 169.4,699.3C173.0,698.4 176.4,697.0 180.2,695.6C184.0,694.2 188.6,692.6 192.4,691.2C196.2,689.8 199.2,688.6 203.3,687.2C207.4,685.9 212.3,684.2 216.8,683.1C221.3,682.0 226.8,681.2 230.4,680.7C234.0,680.2 235.1,680.0 238.5,680.2C241.9,680.4 247.1,681.4 250.7,681.7C254.3,682.0 257.3,681.8 260,682C262.7,682.2 264.2,682.7 266.7,682.8C269.2,682.9 271.7,682.9 274.9,682.6C278.1,682.3 282.1,681.7 285.7,681.2C289.3,680.7 293.1,680.2 296.5,679.5C299.9,678.8 303.1,677.7 306,677.2C308.9,676.7 311.4,677.1 314.1,676.7C316.8,676.3 319.7,675.5 322.3,675C324.9,674.5 327.2,673.6 329.7,673.4C332.2,673.2 334.7,674.0 337.2,673.6C339.7,673.2 341.4,672.2 344.6,670.7C347.8,669.2 352.0,667.2 356.2,664.6C360.4,662.0 365.0,658.5 369.7,655.1C374.4,651.7 379.2,648.4 384.6,644.2C390.0,640.0 398.3,633.5 402.2,630C406.1,626.5 405.5,624.7 408.1,622.9C410.7,621.1 413.8,620.3 417.6,619.3C421.5,618.2 427.1,617.6 431.2,616.6C435.3,615.6 438.2,614.7 442,613.2C445.8,611.7 450.4,609.3 454.2,607.5C458.0,605.7 461.4,603.9 465,602.6C468.6,601.3 472.3,600.4 475.9,599.6C479.5,598.8 483.1,598.4 486.7,598C490.3,597.6 494.0,597.4 497.6,597.3C501.2,597.2 505.0,597.8 508.4,597.6C511.8,597.4 514.5,596.7 517.9,596.2C521.3,595.8 525.3,595.7 528.7,594.9C532.1,594.1 535.0,592.6 538.2,591.5C541.4,590.4 544.5,589.0 547.7,588.1C550.9,587.2 553.8,586.7 557.2,586.3C560.6,585.9 564.6,586.2 568,585.8C571.4,585.3 574.3,584.7 577.5,583.6C580.7,582.5 583.6,581.3 587,579.3C590.4,577.3 594.2,574.5 597.8,571.8C601.4,569.1 605.1,566.1 608.7,563C612.3,559.9 615.9,556.6 619.5,552.9C623.1,549.2 627.7,543.5 630.4,540.7C633.1,538.0 631.9,540.4 635.8,536.4C639.7,532.4 647.7,524.7 653.7,517C659.7,509.3 665.6,499.1 671.6,490.1C677.6,481.2 684.6,470.2 689.6,463.3C694.6,456.4 697.5,453.9 701.5,448.4C705.5,442.9 709.4,436.9 713.4,430.4C717.4,423.9 721.4,416.1 725.4,409.6C729.4,403.1 732.8,397.6 737.3,391.6C741.8,385.6 747.2,378.9 752.2,373.7C757.2,368.5 762.7,364.0 767.2,360.3C771.7,356.6 774.6,353.8 779.1,351.3C783.6,348.8 789.0,347.0 794,345.4C799.0,343.8 803.5,342.5 809,341.5C814.5,340.5 821.4,340.6 826.9,339.4C832.4,338.2 837.9,335.8 841.8,334.3C845.6,332.8 845.6,333.0 850,330.6C854.4,328.2 861.9,323.1 867.9,320.1C873.9,317.1 879.8,314.9 885.8,312.7C891.8,310.5 897.7,309.2 903.7,306.7C909.7,304.2 916.1,300.6 921.6,297.8C927.1,295.0 931.6,293.4 936.6,289.7C941.6,286.0 947.0,279.5 951.5,275.4C956.0,271.3 958.9,269.1 963.4,264.9C967.9,260.7 973.4,254.6 978.4,250C983.4,245.4 988.3,241.2 993.3,237.2C998.3,233.2 1003.2,229.1 1008.2,226.1C1013.2,223.1 1018.1,221.8 1023.1,219.3C1028.1,216.8 1033.1,213.7 1038.1,211.2C1043.1,208.7 1048.0,206.4 1053,204.3C1058.0,202.2 1062.9,200.0 1067.9,198.4C1072.9,196.8 1078.3,195.6 1082.8,194.8C1087.3,194.1 1088.9,193.7 1094.8,193.9C1100.7,194.1 1111.1,195.2 1117.9,196.1C1124.7,197.0 1129.8,198.0 1135.8,199.1C1141.8,200.2 1148.2,201.8 1153.7,202.7C1159.2,203.6 1163.2,204.4 1168.7,204.8C1174.2,205.2 1181.1,205.2 1186.6,205.4C1192.1,205.7 1196.0,206.5 1201.5,206.3C1207.0,206.1 1213.9,205.2 1219.4,204.2C1224.9,203.2 1229.3,202.0 1234.3,200.3C1239.3,198.7 1244.3,196.5 1249.3,194.3C1254.3,192.1 1259.2,189.6 1264.2,186.9C1269.2,184.2 1274.1,180.6 1279.1,177.9C1284.1,175.2 1289.0,173.0 1294,171C1299.0,169.0 1304.0,167.4 1309,166C1314.0,164.6 1318.9,163.9 1323.9,162.4C1328.9,160.9 1332.8,158.9 1338.8,157C1344.8,155.1 1352.7,153.0 1360,151C1367.3,149.0 1374.6,146.6 1382.6,145C1390.6,143.4 1401.9,142.2 1408,141.6C1414.1,141.0 1414.0,142.1 1419,141.2C1424.0,140.3 1432.7,137.9 1437.9,136.4C1443.2,134.9 1446.3,133.8 1450.5,132C1454.7,130.2 1459.2,127.6 1463,125.7C1466.8,123.8 1469.8,122.1 1473,120.7C1476.2,119.3 1479.0,118.2 1482,117.5C1485.0,116.8 1487.2,117.0 1491,116.6C1494.8,116.2 1502.5,115.3 1504.8,115" fill="none" stroke="#ffab30" stroke-width="1.15" stroke-linejoin="round"/>
   <g transform="translate(712.8,299)" stroke="#b0d0ea" stroke-width="1.6" stroke-linecap="round" fill="none"><path d="M-1.8,-2.4Q-0.1,-0.2 2.6,1.9"/><path d="M2.4,-2.1Q0.2,0 -2.5,2.3"/></g>
<g transform="translate(736.8,287.3)" stroke="#b0d0ea" stroke-width="1.6" stroke-linecap="round" fill="none"><path d="M-1.8,-2.4Q-0.1,-0.2 2.6,1.9"/><path d="M2.4,-2.1Q0.2,0 -2.5,2.3"/></g>
<g transform="translate(880.8,229.2)" stroke="#b0d0ea" stroke-width="1.6" stroke-linecap="round" fill="none"><path d="M-1.8,-2.4Q-0.1,-0.2 2.6,1.9"/><path d="M2.4,-2.1Q0.2,0 -2.5,2.3"/></g>
<g transform="translate(905,228)" stroke="#b0d0ea" stroke-width="1.6" stroke-linecap="round" fill="none"><path d="M-1.8,-2.4Q-0.1,-0.2 2.6,1.9"/><path d="M2.4,-2.1Q0.2,0 -2.5,2.3"/></g>
<g transform="translate(953,187.3)" stroke="#b0d0ea" stroke-width="1.6" stroke-linecap="round" fill="none"><path d="M-1.8,-2.4Q-0.1,-0.2 2.6,1.9"/><path d="M2.4,-2.1Q0.2,0 -2.5,2.3"/></g>
<g transform="translate(1000.7,159.4)" stroke="#b0d0ea" stroke-width="1.6" stroke-linecap="round" fill="none"><path d="M-1.8,-2.4Q-0.1,-0.2 2.6,1.9"/><path d="M2.4,-2.1Q0.2,0 -2.5,2.3"/></g>
<g transform="translate(1041,145.5)" stroke="#b0d0ea" stroke-width="1.6" stroke-linecap="round" fill="none"><path d="M-1.8,-2.4Q-0.1,-0.2 2.6,1.9"/><path d="M2.4,-2.1Q0.2,0 -2.5,2.3"/></g>
<g transform="translate(1161,192)" stroke="#b0d0ea" stroke-width="1.6" stroke-linecap="round" fill="none"><path d="M-1.8,-2.4Q-0.1,-0.2 2.6,1.9"/><path d="M2.4,-2.1Q0.2,0 -2.5,2.3"/></g>
<g transform="translate(1177,169)" stroke="#b0d0ea" stroke-width="1.6" stroke-linecap="round" fill="none"><path d="M-1.8,-2.4Q-0.1,-0.2 2.6,1.9"/><path d="M2.4,-2.1Q0.2,0 -2.5,2.3"/></g>
<g transform="translate(1209,148)" stroke="#b0d0ea" stroke-width="1.6" stroke-linecap="round" fill="none"><path d="M-1.8,-2.4Q-0.1,-0.2 2.6,1.9"/><path d="M2.4,-2.1Q0.2,0 -2.5,2.3"/></g>
<g transform="translate(1241,120.4)" stroke="#b0d0ea" stroke-width="1.6" stroke-linecap="round" fill="none"><path d="M-1.8,-2.4Q-0.1,-0.2 2.6,1.9"/><path d="M2.4,-2.1Q0.2,0 -2.5,2.3"/></g>
<g transform="translate(1313,148)" stroke="#b0d0ea" stroke-width="1.6" stroke-linecap="round" fill="none"><path d="M-1.8,-2.4Q-0.1,-0.2 2.6,1.9"/><path d="M2.4,-2.1Q0.2,0 -2.5,2.3"/></g>
<g transform="translate(1345,124.8)" stroke="#b0d0ea" stroke-width="1.6" stroke-linecap="round" fill="none"><path d="M-1.8,-2.4Q-0.1,-0.2 2.6,1.9"/><path d="M2.4,-2.1Q0.2,0 -2.5,2.3"/></g>
<g transform="translate(1361,100.5)" stroke="#b0d0ea" stroke-width="1.6" stroke-linecap="round" fill="none"><path d="M-1.8,-2.4Q-0.1,-0.2 2.6,1.9"/><path d="M2.4,-2.1Q0.2,0 -2.5,2.3"/></g>
<g transform="translate(1449,71.5)" stroke="#b0d0ea" stroke-width="1.6" stroke-linecap="round" fill="none"><path d="M-1.8,-2.4Q-0.1,-0.2 2.6,1.9"/><path d="M2.4,-2.1Q0.2,0 -2.5,2.3"/></g>
<g transform="translate(761,337.4)" stroke="#ffbec6" stroke-width="1.6" stroke-linecap="round" fill="none"><path d="M-1.8,-2.4Q-0.1,-0.2 2.6,1.9"/><path d="M2.4,-2.1Q0.2,0 -2.5,2.3"/></g>
<g transform="translate(785,385)" stroke="#ffbec6" stroke-width="1.6" stroke-linecap="round" fill="none"><path d="M-1.8,-2.4Q-0.1,-0.2 2.6,1.9"/><path d="M2.4,-2.1Q0.2,0 -2.5,2.3"/></g>
<g transform="translate(945,240.3)" stroke="#ffbec6" stroke-width="1.6" stroke-linecap="round" fill="none"><path d="M-1.8,-2.4Q-0.1,-0.2 2.6,1.9"/><path d="M2.4,-2.1Q0.2,0 -2.5,2.3"/></g>
<g transform="translate(1009,200)" stroke="#ffbec6" stroke-width="1.6" stroke-linecap="round" fill="none"><path d="M-1.8,-2.4Q-0.1,-0.2 2.6,1.9"/><path d="M2.4,-2.1Q0.2,0 -2.5,2.3"/></g>
<g transform="translate(1081,230.5)" stroke="#ffbec6" stroke-width="1.6" stroke-linecap="round" fill="none"><path d="M-1.8,-2.4Q-0.1,-0.2 2.6,1.9"/><path d="M2.4,-2.1Q0.2,0 -2.5,2.3"/></g>
<g transform="translate(1121,260.5)" stroke="#ffbec6" stroke-width="1.6" stroke-linecap="round" fill="none"><path d="M-1.8,-2.4Q-0.1,-0.2 2.6,1.9"/><path d="M2.4,-2.1Q0.2,0 -2.5,2.3"/></g>
<g transform="translate(1249,162)" stroke="#ffbec6" stroke-width="1.6" stroke-linecap="round" fill="none"><path d="M-1.8,-2.4Q-0.1,-0.2 2.6,1.9"/><path d="M2.4,-2.1Q0.2,0 -2.5,2.3"/></g>
<g transform="translate(1273,171)" stroke="#ffbec6" stroke-width="1.6" stroke-linecap="round" fill="none"><path d="M-1.8,-2.4Q-0.1,-0.2 2.6,1.9"/><path d="M2.4,-2.1Q0.2,0 -2.5,2.3"/></g>
<g transform="translate(1289,166)" stroke="#ffbec6" stroke-width="1.6" stroke-linecap="round" fill="none"><path d="M-1.8,-2.4Q-0.1,-0.2 2.6,1.9"/><path d="M2.4,-2.1Q0.2,0 -2.5,2.3"/></g>
<g transform="translate(1393,147.2)" stroke="#ffbec6" stroke-width="1.6" stroke-linecap="round" fill="none"><path d="M-1.8,-2.4Q-0.1,-0.2 2.6,1.9"/><path d="M2.4,-2.1Q0.2,0 -2.5,2.3"/></g>
<g transform="translate(969.5,243.4)" stroke="#800080" stroke-width="3" stroke-linecap="round" fill="none"><path d="M-2.8,-3.9Q-0.2,-0.4 4.3,2.8"/><path d="M4,-3.3Q0.3,0 -4.1,3.7"/></g>
<g transform="translate(1025.5,213.2)" stroke="#800080" stroke-width="3" stroke-linecap="round" fill="none"><path d="M-2.8,-3.9Q-0.2,-0.4 4.3,2.8"/><path d="M4,-3.3Q0.3,0 -4.1,3.7"/></g>
<g transform="translate(1057.6,203.4)" stroke="#800080" stroke-width="3" stroke-linecap="round" fill="none"><path d="M-2.8,-3.9Q-0.2,-0.4 4.3,2.8"/><path d="M4,-3.3Q0.3,0 -4.1,3.7"/></g>
<g transform="translate(770,286.8)" stroke="#ff9a14" stroke-width="3" stroke-linecap="round" fill="none"><path d="M-2.8,-3.9Q-0.2,-0.4 4.3,2.8"/><path d="M4,-3.3Q0.3,0 -4.1,3.7"/></g>
<g transform="translate(1065.6,131.5)" stroke="#ff9a14" stroke-width="3" stroke-linecap="round" fill="none"><path d="M-2.8,-3.9Q-0.2,-0.4 4.3,2.8"/><path d="M4,-3.3Q0.3,0 -4.1,3.7"/></g>
<g transform="translate(1297.5,126.6)" stroke="#ff9a14" stroke-width="3" stroke-linecap="round" fill="none"><path d="M-2.8,-3.9Q-0.2,-0.4 4.3,2.8"/><path d="M4,-3.3Q0.3,0 -4.1,3.7"/></g>
<g transform="translate(1401.5,102.6)" stroke="#ff9a14" stroke-width="3" stroke-linecap="round" fill="none"><path d="M-2.8,-3.9Q-0.2,-0.4 4.3,2.8"/><path d="M4,-3.3Q0.3,0 -4.1,3.7"/></g>
<circle cx="880.8" cy="280.2" r="3" fill="#d9303c"/>
<circle cx="1137" cy="267.4" r="3" fill="#d9303c"/>
<circle cx="1209" cy="194.3" r="3" fill="#d9303c"/>
<circle cx="1304.5" cy="189" r="3" fill="#d9303c"/>
<path d="M817,397.5L820.8,402.5L817,407.5L813.2,402.5Z" fill="#ff9a14"/>
<path d="M913,271.5L916.8,276.5L913,281.5L909.2,276.5Z" fill="#ff9a14"/>
<path d="M1169,231.4L1172.8,236.4L1169,241.4L1165.2,236.4Z" fill="#ff9a14"/>
<path d="M1225,187.2L1228.8,192.2L1225,197.2L1221.2,192.2Z" fill="#ff9a14"/>
<path d="M1321,186.2L1324.8,191.2L1321,196.2L1317.2,191.2Z" fill="#ff9a14"/>
<path d="M1409,150.3L1412.8,155.3L1409,160.3L1405.2,155.3Z" fill="#ff9a14"/>
   <circle cx="1464.8" cy="58" r="3.3" fill="#3a8fd6"/>
   <path d="M1500.5,60L1511,60L1505.7,65.2Z" fill="#6e7f92"/>
  </g>
 </svg>
 <div id="ctitle">GER40, M1:&nbsp; Germany DAX 40 Index</div>
 <div class="mono" style="top:80.5px">Time: 2026.02.02 11:55:17</div>
 <div class="mono" style="top:100.6px">No active positions</div>
 <div class="mono" style="top:120.6px;color:#30f030">TradeManagerPanel ready</div>
 <div id="tmp">TradeManagerPanel</div>
 <svg style="left:1846px;top:5px" width="18" height="14" viewBox="0 0 18 14"><path d="M1.5,4.6L9,1.5L16.5,4.6L9,7.6Z M4.6,6.2V10.2C6.8,12.2 11.2,12.2 13.4,10.2V6.2" fill="#cfe3f5" stroke="#2f77b8" stroke-width="1.2" stroke-linejoin="round"/><path d="M2.4,5V10.5" stroke="#2f77b8" stroke-width="1.2"/><circle cx="2.4" cy="11.3" r="1.2" fill="#2f77b8"/></svg>
 <div class="ptick" style="top:11px"></div><div class="plab" style="top:5.7px">24604.5</div>
<div class="ptick" style="top:44px"></div><div class="plab" style="top:38.3px">24587.0</div>
<div class="ptick" style="top:77px"></div><div class="plab" style="top:71.0px">24569.5</div>
<div class="ptick" style="top:109px"></div><div class="plab" style="top:103.6px">24552.0</div>
<div class="ptick" style="top:142px"></div><div class="plab" style="top:136.3px">24534.5</div>
<div class="ptick" style="top:175px"></div><div class="plab" style="top:168.9px">24517.0</div>
<div class="ptick" style="top:207px"></div><div class="plab" style="top:201.5px">24499.5</div>
<div class="ptick" style="top:240px"></div><div class="plab" style="top:234.2px">24482.0</div>
<div class="ptick" style="top:272px"></div><div class="plab" style="top:266.8px">24464.5</div>
<div class="ptick" style="top:305px"></div><div class="plab" style="top:299.5px">24447.0</div>
<div class="ptick" style="top:338px"></div><div class="plab" style="top:332.1px">24429.5</div>
<div class="ptick" style="top:370px"></div><div class="plab" style="top:364.7px">24412.0</div>
<div class="ptick" style="top:403px"></div><div class="plab" style="top:397.4px">24394.5</div>
<div class="ptick" style="top:436px"></div><div class="plab" style="top:430.0px">24377.0</div>
<div class="ptick" style="top:468px"></div><div class="plab" style="top:462.7px">24359.5</div>
<div class="ptick" style="top:501px"></div><div class="plab" style="top:495.3px">24342.0</div>
<div class="ptick" style="top:534px"></div><div class="plab" style="top:527.9px">24324.5</div>
<div class="ptick" style="top:566px"></div><div class="plab" style="top:560.6px">24307.0</div>
<div class="ptick" style="top:599px"></div><div class="plab" style="top:593.2px">24289.5</div>
<div class="ptick" style="top:631px"></div><div class="plab" style="top:625.9px">24272.0</div>
<div class="ptick" style="top:664px"></div><div class="plab" style="top:658.5px">24254.5</div>
<div class="ptick" style="top:697px"></div><div class="plab" style="top:691.1px">24237.0</div>
<div class="ptick" style="top:729px"></div><div class="plab" style="top:723.8px">24219.5</div>
 <div id="curp">24577.3</div>
 <div class="ttick" style="left:1px"></div><div class="tlab" style="left:1.5px">2 Feb 2026</div>
<div class="ttick" style="left:65px"></div><div class="tlab" style="left:65.5px">2 Feb 08:55</div>
<div class="ttick" style="left:129px"></div><div class="tlab" style="left:129.5px">2 Feb 09:03</div>
<div class="ttick" style="left:193px"></div><div class="tlab" style="left:193.5px">2 Feb 09:11</div>
<div class="ttick" style="left:257px"></div><div class="tlab" style="left:257.5px">2 Feb 09:19</div>
<div class="ttick" style="left:321px"></div><div class="tlab" style="left:321.5px">2 Feb 09:27</div>
<div class="ttick" style="left:385px"></div><div class="tlab" style="left:385.5px">2 Feb 09:35</div>
<div class="ttick" style="left:449px"></div><div class="tlab" style="left:449.5px">2 Feb 09:43</div>
<div class="ttick" style="left:513px"></div><div class="tlab" style="left:513.5px">2 Feb 09:51</div>
<div class="ttick" style="left:577px"></div><div class="tlab" style="left:577.5px">2 Feb 09:59</div>
<div class="ttick" style="left:641px"></div><div class="tlab" style="left:641.5px">2 Feb 10:07</div>
<div class="ttick" style="left:705px"></div><div class="tlab" style="left:705.5px">2 Feb 10:15</div>
<div class="ttick" style="left:769px"></div><div class="tlab" style="left:769.5px">2 Feb 10:23</div>
<div class="ttick" style="left:833px"></div><div class="tlab" style="left:833.5px">2 Feb 10:31</div>
<div class="ttick" style="left:897px"></div><div class="tlab" style="left:897.5px">2 Feb 10:39</div>
<div class="ttick" style="left:961px"></div><div class="tlab" style="left:961.5px">2 Feb 10:47</div>
<div class="ttick" style="left:1025px"></div><div class="tlab" style="left:1025.5px">2 Feb 10:55</div>
<div class="ttick" style="left:1089px"></div><div class="tlab" style="left:1089.5px">2 Feb 11:03</div>
<div class="ttick" style="left:1153px"></div><div class="tlab" style="left:1153.5px">2 Feb 11:11</div>
<div class="ttick" style="left:1217px"></div><div class="tlab" style="left:1217.5px">2 Feb 11:19</div>
<div class="ttick" style="left:1281px"></div><div class="tlab" style="left:1281.5px">2 Feb 11:27</div>
<div class="ttick" style="left:1345px"></div><div class="tlab" style="left:1345.5px">2 Feb 11:35</div>
<div class="ttick" style="left:1409px"></div><div class="tlab" style="left:1409.5px">2 Feb 11:43</div>
<div class="ttick" style="left:1473px"></div><div class="tlab" style="left:1473.5px">2 Feb 11:51</div>
</div>

<div id="panel">
 <div id="ptitle">Trading Panel</div>
 <div id="pmin"></div>
 <svg id="pclose" width="10" height="10" viewBox="0 0 10 10"><path d="M1.5,1.5L8.5,8.5M8.5,1.5L1.5,8.5" stroke="#8a8a8a" stroke-width="2.2" fill="none"/></svg>
 <div id="pclient"></div>
</div>
<div class="plabel" style="left:26px;top:241.6px;font-size:13.6px">Risk ($):</div>
<div class="pinput" style="left:116px;top:241px;width:81px;height:20px">50.00</div>
<div class="plabel" style="left:26px;top:281.6px;font-size:13.6px">Lot Size:</div>
<div class="pinput" style="left:116px;top:281px;width:81px;height:20px">0.0</div>
<div class="pbtn" style="left:26px;top:321px;width:80px;height:30px;background:#800000">Draw SL</div>
<div class="pbtn" style="left:116px;top:321px;width:80px;height:30px;background:#006400">Draw TP</div>
<div class="pbtn" style="left:206px;top:321px;width:80px;height:30px;background:#2f4f4f">Draw PO</div>
<div class="pbtn" style="left:26px;top:361px;width:270px;height:30px;background:#2f4f4f">Draw TPs</div>
<div class="pbtn" style="left:26px;top:401px;width:130px;height:30px;background:#006400">Buy</div>
<div class="pbtn" style="left:166px;top:401px;width:130px;height:30px;background:#800000">Sell</div>
<div class="pbtn" style="left:26px;top:441px;width:130px;height:30px;background:#006400">Move SL to BE</div>
<div id="chk"><svg width="13" height="13" viewBox="0 0 13 13"><path d="M3,6.2L5.4,9.6L10,2.8" stroke="#2a5db0" stroke-width="1.6" fill="none"/></svg></div>
<div class="plabel" style="left:230.5px;top:443.5px;transform:scaleX(0.885);transform-origin:left center">UseRRVSL</div>
<div class="pbtn" style="left:26px;top:481px;width:130px;height:30px;background:#006400">Take Partial</div>
<div class="pinput" style="left:206px;top:481px;width:81px;height:20px">0.50</div>
<div class="pbtn" style="left:26px;top:521px;width:130px;height:30px;background:#2f4f4f">Close Pending</div>
<div class="pbtn" style="left:166px;top:521px;width:130px;height:30px;background:#2f4f4f">Close Active</div>
<div class="pbtn" style="left:26px;top:561px;width:270px;height:30px;background:#2f4f4f">Close All</div>
<div class="pbtn" style="left:26px;top:601px;width:270px;height:30px;background:#4682b4">Reset Panel</div>

<div id="tabs">
 <div id="acttab"></div>
 <div class="tab" style="left:14px">NAS100,M1</div><div class="tsep" style="left:87px"></div>
 <div class="tab" style="left:100px">US500,M1</div>
 <div class="tab" style="left:176.5px;color:#111;letter-spacing:-0.95px">GER40,M1</div>
 <div class="tab" style="left:253px">NAS100,M1</div><div class="tsep" style="left:326px"></div>
 <div class="tab" style="left:338px">NAS100,M1</div><div class="tsep" style="left:411px"></div>
 <div class="tab" style="left:423px">NAS100,M1</div>
 <svg style="left:1880px;top:4px" width="30" height="10" viewBox="0 0 30 10"><path d="M5.5,1.5V8.5L1.5,5Z M22.8,1.5V8.5L26.8,5Z" fill="#b4b4b4"/></svg>
</div>
<div id="bottom">
 <div style="left:0;top:0;width:14px;height:4px;background:#c5d3e3"></div>
 <div class="bsep" style="left:245px"></div><div class="bsep" style="left:402px"></div><div class="bsep" style="left:543px"></div><div class="bsep" style="left:718px"></div><div class="bsep" style="left:1070px"></div><div class="bsep" style="left:1421px"></div><div class="bsep" style="left:1598px"></div>
</div>
</div>
</body></html>
